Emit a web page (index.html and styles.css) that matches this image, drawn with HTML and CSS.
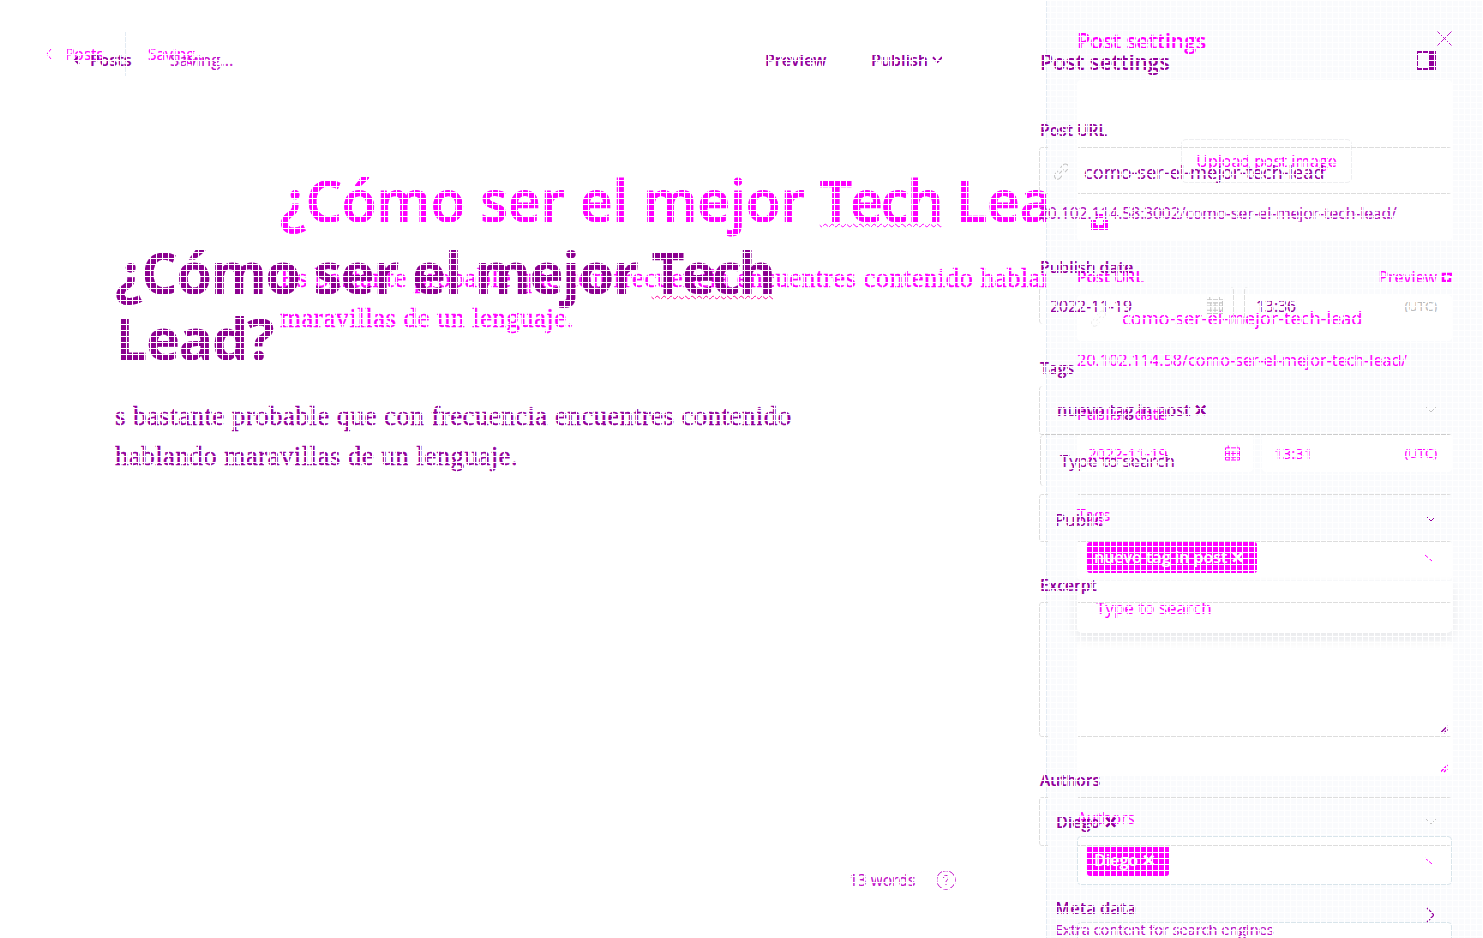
FILE: index.html
```
<!DOCTYPE html>
<html lang="es">
<head>
<meta charset="utf-8">
<title>Post settings</title>
<link rel="stylesheet" href="styles.css">
</head>
<body>
<svg width="0" height="0" class="defs">
  <symbol id="chev" viewBox="0 0 12 8"><path d="M1 1l5 5 5-5" fill="none" stroke="currentColor"/></symbol>
  <symbol id="link" viewBox="0 0 16 16"><path d="M6 10l4-4M7 4.500l2.500-2.700a2.800 2.800 0 0 1 4.300 4L11.300 8.500M9 11.500l-2.500 2.700a2.800 2.800 0 0 1-4.300-4L4.700 7.500" fill="none" stroke="currentColor"/></symbol>
  <symbol id="cal" viewBox="0 0 16 16"><path d="M.5 2.500h15v13H.5zM.5 5.500h15M.5 8.500h15M.5 12.500h15M4.500 5v10M8.500 5v10M12.500 5v10M3.500 0v3M12.500 0v3" fill="none" stroke="currentColor"/></symbol>
  <symbol id="grip" viewBox="0 0 10 10"><path d="M1 9l8-8M5 9l4-4" fill="none" stroke="currentColor" stroke-width="1.500"/></symbol>
</svg>
<div class="stage">
  <div class="layer old">
    <main class="editor">
      <div class="bar"><span class="back"><svg width="6" height="10" viewBox="0 0 6 10"><path d="M5 0L1 5l4 5" fill="none" stroke="currentColor"/></svg></span><span class="posts">Posts</span><i class="rule"></i><span class="saving">Saving...</span></div>
      <h1>¿Cómo ser el mejor <u>Tech</u> Lead?</h1>
      <p>Es bastante probable que con frecuencia encuentres contenido hablando<br>maravillas de un lenguaje.</p>
    </main>
    <aside class="panel">
      <header><b>Post settings</b><svg width="15" height="15" viewBox="0 0 15 15"><path d="M.5.500l14 14M14.500.500l-14 14" stroke="#c018c8" fill="none"/></svg></header>
      <div class="upload"><span>Upload post image</span><svg width="17" height="16" viewBox="0 0 17 16"><path d="M0 6h5v5h7V6h5v10H0zM5 0h7v4H5z" fill="currentColor"/></svg></div>
      <div class="label url"><b>Post URL</b><span class="preview">Preview <svg width="11" height="11" viewBox="0 0 11 11"><path d="M5 2H2v7h7V6M6 2h4v3" stroke="currentColor" stroke-width="2.500" fill="none"/></svg></span></div>
      <div class="box slug"><svg class="pale" width="17" height="17"><use href="#link"/></svg><span>como-ser-el-mejor-tech-lead</span></div>
      <div class="hint">20.102.114.58/como-ser-el-mejor-tech-lead/</div>
      <div class="label pub">Publish date</div>
      <div class="dates"><div class="box"><span>2022-11-19</span><svg width="15" height="16"><use href="#cal"/></svg></div><div class="box"><span>13:31</span><em>(UTC)</em></div></div>
      <div class="label tags">Tags</div>
      <div class="box pick"><span class="chip wide">nuevo tag in post ✕</span><svg width="12" height="8" viewBox="0 0 12 8"><path d="M1 1l7 6" stroke="currentColor"/></svg></div>
      <div class="drop">Type to search</div>
      <div class="box area"><svg width="10" height="9"><use href="#grip"/></svg></div>
      <div class="label auth">Authors</div>
      <div class="box pick author"><span class="chip small">Diego ✕</span><svg width="12" height="8" viewBox="0 0 12 8"><path d="M1 1l7 6" stroke="currentColor"/></svg></div>
      <div class="box next"></div>
    </aside>
  </div>
  <div class="layer new">
    <main class="editor">
      <div class="bar"><svg width="7" height="10" viewBox="0 0 7 10"><path d="M6 1L2 5l4 4" fill="none" stroke="currentColor" stroke-width="2"/></svg><b class="posts">Posts</b><span class="saving">Saving...</span><b class="prev">Preview</b><b class="publish">Publish <svg width="11" height="8"><use href="#chev" stroke-width="2"/></svg></b></div>
      <h1>¿Cómo ser el mejor <u>Tech</u><br>Lead?</h1>
      <p>s bastante probable que con frecuencia encuentres contenido<br>hablando maravillas de un lenguaje.</p>
      <footer><span class="words">13 words</span><svg width="20" height="20" viewBox="0 0 20 20"><circle cx="10" cy="10" r="9.300" fill="none" stroke="currentColor"/><path d="M7.500 8a2.500 2.500 0 1 1 3.500 2.200q-1 .5-1 1.800M10 14v1" fill="none" stroke="currentColor"/></svg></footer>
    </main>
    <aside class="panel">
      <header><b>Post settings</b><svg width="20" height="19" viewBox="0 0 20 19"><path d="M1 1h18v17H1z" fill="none" stroke="currentColor" stroke-width="2"/><path d="M12 1h6v17h-6z" fill="currentColor"/></svg></header>
      <b class="label url">Post URL</b>
      <div class="field slug"><svg class="pale" width="17" height="17"><use href="#link"/></svg><span>como-ser-el-mejor-tech-lead</span></div>
      <div class="hint">20.102.114.58:3002/como-ser-el-mejor-tech-lead/</div>
      <b class="label pub">Publish date</b>
      <div class="dates"><div class="field day"><span>2022-11-19</span><svg class="pale" width="17" height="17"><use href="#cal"/></svg></div><div class="field time"><span>13:36</span><em>(UTC)</em></div></div>
      <b class="label tags">Tags</b>
      <div class="field pick"><b class="tag">nuevo tag in post ✕</b><svg class="pale" width="12" height="8"><use href="#chev"/></svg></div>
      <div class="field drop">Type to search</div>
      <div class="field public"><span>Public</span><svg width="12" height="8"><use href="#chev"/></svg></div>
      <b class="label exc">Excerpt</b>
      <div class="field area"><svg width="10" height="9"><use href="#grip"/></svg></div>
      <b class="label auth">Authors</b>
      <div class="field author"><b>Diego ✕</b><svg class="pale" width="12" height="8"><use href="#chev"/></svg></div>
      <div class="meta"><div><b>Meta data</b><small>Extra content for search engines</small></div><svg width="10" height="16" viewBox="0 0 10 16"><path d="M1 1l7 7-7 7" fill="none" stroke="currentColor" stroke-width="1.200"/></svg></div>
    </aside>
  </div>
  <div class="mesh"></div>
</div>
</body>
</html>
```
FILE: styles.css
```
* { box-sizing: border-box; }
body { margin: 0; background: #fff; font-family: "Open Sans", "Noto Sans", sans-serif; overflow: hidden; -webkit-text-stroke: .2px; }
svg { flex: none; display: block; }
.defs { position: absolute; }
.stage { display: grid; width: 1483px; height: 938px; overflow: hidden; }
.stage > * { grid-area: 1 / 1; min-width: 0; height: 938px; }
.layer { display: flex; overflow: hidden; }
.old { color: #f0f; }
.new { z-index: 2; color: #92009c; }
.mesh {
  z-index: 3;
  pointer-events: none;
  background:
    repeating-linear-gradient(to right, #fff 0 1px, transparent 1px 6px),
    repeating-linear-gradient(to bottom, #fff 0 1px, transparent 1px 6px);
}
.editor { flex: none; overflow: hidden; white-space: nowrap; }
.panel { flex: none; white-space: nowrap; overflow: hidden; }
b { font-weight: 600; }
em { font-style: normal; font-size: 13px; }
h1 { margin: 0; font-size: 57px; line-height: 66px; font-weight: 600; }
h1 u { text-decoration: underline wavy 1px; text-underline-offset: 1px; text-decoration-skip-ink: none; letter-spacing: -2px; }
p { margin: 0; font: 27px/40px "Liberation Serif", serif; letter-spacing: .4px; -webkit-text-stroke: .4px; }
.bar { display: flex; align-items: center; font-size: 15.500px; line-height: 20px; }
header { display: flex; justify-content: space-between; font-size: 21px; line-height: 28px; }
.pale { color: #c4c4c4; }
.label { display: block; font-size: 15.600px; line-height: 20px; }
.hint { font-size: 15.550px; line-height: 20px; }
.slug { display: flex; align-items: center; font-size: 18.200px; }
.dates { display: flex; font-size: 15.700px; }
.dates .box, .dates .field { display: flex; align-items: center; justify-content: space-between; }

.old .editor { width: 1046px; padding-left: 280px; }
.old .bar { margin: 32px 0 0 -234px; height: 44px; }
.old .posts { width: 60px; padding-left: 13px; }
.old .rule { width: 1px; height: 44px; margin: 0 22px 0 13px; background: #e3ebf3; }
.old h1 { margin-top: 91px; letter-spacing: -.1px; -webkit-text-stroke: .8px; }
.old p { margin-top: 25px; }
.old .panel { width: 437px; height: 938px; padding: 27px 31px 0 30px; background: #fafbfd; border-left: 1px solid #e3ebf3; }
.old header { font-size: 21.300px; }
.old header b { font-weight: 600; letter-spacing: -.2px; }
.old header svg { margin-top: 4px; }
.box { background: #fff; border-radius: 4px; }
.upload { height: 161px; margin-top: 25px; padding-top: 59px; background: #fff; border-radius: 4px; }
.upload span { display: block; width: 171px; height: 44px; margin-left: 104px; border: 1px solid #eeeff1; border-radius: 5px; text-align: center; font-size: 16px; line-height: 43px; }
.upload svg { margin: 31px 0 0 14px; }
.old .label { font-weight: 500; }
.old .url { display: flex; justify-content: space-between; margin-top: 26px; }
.preview { display: flex; align-items: center; gap: 4px; font-size: 16px; font-weight: 400; }
.old .slug { height: 46px; margin-top: 8px; padding-left: 13px; gap: 15px; }
.old .slug .pale { color: #eee; }
.old .hint { margin-top: 9px; font-size: 16.150px; }
.old .pub { margin-top: 34px; }
.old .dates { gap: 9px; height: 38px; margin-top: 10px; }
.old .dates .box { font-size: 15.200px; }
.old .dates .box:first-child { width: 176px; padding: 0 13px 0 11px; }
.old .dates .box:last-child { flex: 1; padding: 0 15px 0 12px; }
.old .tags { margin-top: 33px; }
.pick { display: flex; justify-content: space-between; }
.old .pick { height: 39px; margin-top: 16px; padding: 1px 16px 0 10px; }
.old .pick svg { margin-top: 12px; }
.chip { height: 31px; padding-left: 7px; border-radius: 3px; background: #f0f; color: #fff; font-weight: 600; font-size: 16px; line-height: 31px; }
.wide { width: 170px; }
.small { width: 82px; }
.old .drop { height: 52px; margin-top: 1px; padding-left: 19px; font-size: 17px; line-height: 53px; background: #fff; border-radius: 0 0 5px 5px; box-shadow: 0 6px 14px rgba(0,0,0,.08); position: relative; }
.area { display: flex; justify-content: flex-end; align-items: flex-end; }
.old .area { height: 135px; margin-top: 8px; padding: 3px; }
.old .auth { margin-top: 32px; }
.old .pick.author { align-items: flex-start; height: 49px; margin-top: 8px; padding: 8px 15px 0 9px; border: 1px solid #d9e5eb; }
.old .next { height: 40px; margin-top: 37px; border: 1px solid #d9e5eb; }

.new .editor { width: 1039px; height: 938px; padding-left: 115px; }
.new .bar { margin: 50px 0 0 -42px; height: 20px; font-size: 16px; }
.new .posts { width: 90px; padding-left: 10px; }
.new .saving { width: 595px; color: #c010c8; font-size: 16.700px; }
.prev { width: 106px; }
.publish { display: flex; align-items: center; gap: 4px; }
.new h1 { margin-top: 169px; color: #8b008f; font-weight: 700; letter-spacing: -1.050px; }
.new h1 u { letter-spacing: -3px; text-decoration-color: #f09; }
.new p { margin-top: 25px; }
footer { display: flex; align-items: center; height: 24px; margin: 392px 0 0 734px; font-size: 15.500px; color: #c010c8; }
.words { width: 87px; }
.new .panel { width: 413px; height: 938px; padding-top: 48px; }
.new header svg { margin: 3px 16px 0 0; }
.new header b { padding-left: 1px; }
.field {
  border-left: 1px solid #ddd; border-radius: 4px;
  background:
    linear-gradient(to right, #ddd 8px, transparent 8px 38px, #ddd 38px) top / 100% 1px no-repeat,
    linear-gradient(to right, #ddd 8px, transparent 8px 38px, #ddd 38px) bottom / 100% 1px no-repeat;
}
.new .label { padding-left: 1px; }
.new .url { margin-top: 44px; }
.new .slug { height: 47px; margin-top: 7px; padding: 2px 0 0 13px; gap: 14px; }
.new .hint { margin-top: 9px; color: #b010bc; }
.new .pub { margin-top: 34px; }
.new .dates { gap: 10px; margin-top: 10px; height: 37px; }
.dates .field { background: none; }
.day { width: 195px; padding: 0 10px; border-right: 1px solid #ddd; }
.time { flex: 1; padding: 0 15px 0 11px; }
.time em { color: #bbb; }
.new .tags { margin-top: 34px; }
.new .pick, .author, .public { align-items: center; display: flex; justify-content: space-between; padding: 0 15px 0 17px; }
.new .pick { height: 49px; margin-top: 8px; padding-bottom: 2px; font-size: 16px; background: linear-gradient(#ccc, #ccc) bottom / 100% 1px no-repeat; }
.new .drop { height: 51px; margin-left: 1px; padding-left: 19px; font-size: 16.900px; line-height: 51px; background: none; }
.new .public { height: 48px; margin-top: 8px; font-size: 17px; padding: 2px 15px 0 15px; }
.exc { margin-top: 33px; }
.new .area { height: 135px; margin-top: 7px; padding: 3px; }
.new .auth { margin-top: 33px; }
.new .author { height: 49px; margin-top: 7px; padding-left: 16px; font-size: 16px; }
.meta { display: flex; justify-content: space-between; margin-top: 51px; padding: 0 16px 0 16px; }
.meta b { display: block; font-size: 16.500px; line-height: 22px; }
.meta small { display: block; font-size: 14.500px; line-height: 21px; color: #b810c4; }
.meta svg { margin-top: 10px; }
```
